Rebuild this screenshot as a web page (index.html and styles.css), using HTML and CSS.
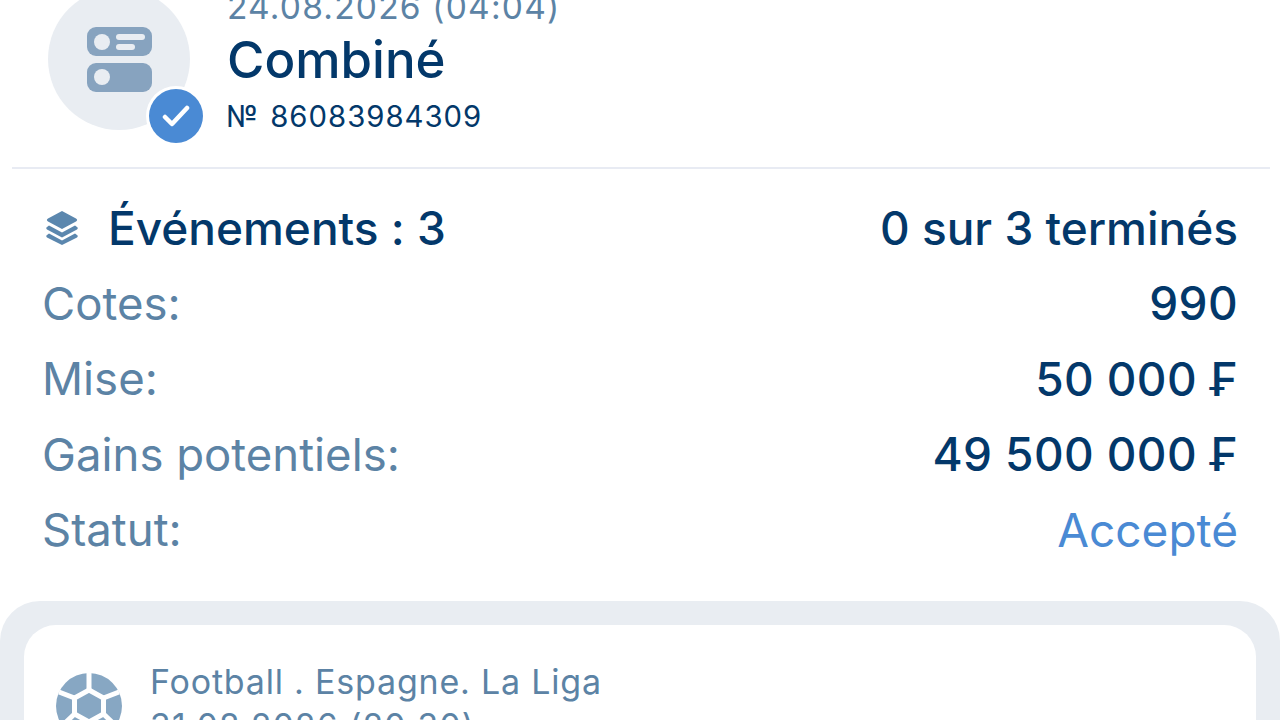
FILE: index.html
```html
<!DOCTYPE html>
<html lang="fr">
<head>
  <meta charset="UTF-8">
  <title>Combiné</title>
  <link rel="stylesheet" href="styles.css">
</head>
<body>
  <div class="page">

    <!-- Bet header -->
    <div class="bet-head">
      <div class="avatar">
        <svg class="avatar-icon" viewBox="0 0 66 66" width="66" height="66">
          <rect x="0" y="0" width="65" height="29" rx="9" fill="#87a3bf"/>
          <rect x="0" y="36" width="65" height="29" rx="9" fill="#87a3bf"/>
          <circle cx="15" cy="15" r="8" fill="#e9edf2"/>
          <circle cx="15" cy="50" r="8" fill="#e9edf2"/>
          <rect x="29" y="7" width="29" height="6" rx="3" fill="#e9edf2"/>
          <rect x="29" y="17" width="19" height="6" rx="3" fill="#e9edf2"/>
        </svg>
        <span class="badge">
          <svg viewBox="0 0 28 28" width="28" height="28">
            <path d="M3 15l7 7L25 6" fill="none" stroke="#fff" stroke-width="4.5" stroke-linecap="round" stroke-linejoin="round"/>
          </svg>
        </span>
      </div>
      <div class="bet-title">
        <div class="bet-date">24.08.2026 (04:04)</div>
        <div class="bet-name">Combiné</div>
        <div class="bet-number">№ 86083984309</div>
      </div>
    </div>

    <hr class="divider">

    <!-- Summary rows -->
    <div class="summary">
      <div class="row">
        <div class="events-label">
          <svg viewBox="0 0 32 34" width="32" height="34">
            <path d="M16 0l14 7.5c1.500.8 1.500 2.200 0 3L16 18 2 10.500c-1.500-.8-1.500-2.200 0-3z" fill="#5b87ae"/>
            <path d="M3 14.500l13 7 13-7 2 1.500c1 .8 1 1.700 0 2.400L16 26.500 1 18.400c-1-.7-1-1.600 0-2.400z" fill="#5b87ae"/>
            <path d="M3 22.500l13 7 13-7 2 1.500c1 .8 1 1.700 0 2.400L16 34 1 26.400c-1-.7-1-1.600 0-2.400z" fill="#5b87ae"/>
          </svg>
          <span class="value">Événements : 3</span>
        </div>
        <span class="value">0 sur 3 terminés</span>
      </div>
      <div class="row"><span class="label">Cotes:</span><span class="value amount">990</span></div>
      <div class="row"><span class="label">Mise:</span><span class="value amount">50 000 ₣</span></div>
      <div class="row"><span class="label">Gains potentiels:</span><span class="value amount">49 500 000 ₣</span></div>
      <div class="row"><span class="label">Statut:</span><span class="status">Accepté</span></div>
    </div>

    <!-- Events list -->
    <div class="events">
      <div class="event-card">
        <svg class="ball" viewBox="0 0 66 66" width="66" height="66">
          <circle cx="33" cy="33" r="33" fill="#87a7c3"/>
          <g stroke="#fff" stroke-width="5">
            <path d="M33 17V0M47.500 25L63 19M18.500 25L3 19M47.500 41L60 53M18.500 41L6 53"/>
            <path d="M33 17l14.500 8v16L33 49l-14.500-8V25z" fill="#87a7c3"/>
          </g>
        </svg>
        <div class="event-info">
          <div class="event-league">Football . Espagne. La Liga</div>
          <div class="event-date">31.08.2026 (20:30)</div>
        </div>
      </div>
    </div>

  </div>
</body>
</html>
```

FILE: styles.css
```css
/* Base */
body {
  margin: 0;
  background: #fff;
  font-family: 'Inter', 'Liberation Sans', sans-serif;
  font-feature-settings: 'calt' 0;
}

.page {
  height: 720px;
  overflow: hidden;
}

/* Header with avatar */
.bet-head {
  display: flex;
  gap: 38px;
  margin-top: -12px;
  padding-left: 48px;
}

.avatar {
  position: relative;
  display: flex;
  flex: none;
  align-items: center;
  justify-content: center;
  width: 142px;
  height: 142px;
  border-radius: 50%;
  background: #e9edf2;
}

.avatar-icon {
  margin: 2px 0 0 2px;
}

.badge {
  position: absolute;
  right: -13px;
  bottom: -13px;
  display: flex;
  align-items: center;
  justify-content: center;
  width: 54px;
  height: 54px;
  border-radius: 50%;
  background: #4a8ad4;
  box-shadow: 0 0 0 3px #fff;
}

.bet-title {
  margin-top: -1px;
  margin-left: -1px;
}

.bet-date {
  font-size: 33.500px;
  line-height: 40px;
  color: #5c83a5;
  letter-spacing: 1.200px;
}

.bet-name {
  font-size: 51px;
  font-weight: 500;
  line-height: 66px;
  color: #03386a;
}

.bet-number {
  margin-left: -1px;
  font-size: 29.300px;
  line-height: 48px;
  color: #03386a;
  letter-spacing: 1px;
  word-spacing: 2px;
}

.divider {
  margin: 26px 10px 0 12px;
  border: none;
  border-top: 2px solid #e8ebf3;
}

/* Summary rows */
.summary {
  padding: 21px 42px 0 42px;
}

.row {
  display: flex;
  justify-content: space-between;
  align-items: center;
  height: 75.500px;
}

.events-label {
  display: flex;
  align-items: center;
  gap: 30px;
  padding-left: 4px;
}

.label {
  font-size: 45.500px;
  color: #5c83a5;
}

.value {
  font-size: 46px;
  font-weight: 500;
  color: #03386a;
}

.amount {
  letter-spacing: 0.400px;
}

.status {
  font-size: 46px;
  color: #4a8ad4;
}

/* Events list */
.events {
  margin-top: 33px;
  padding: 24px;
  border-radius: 40px 40px 0 0;
  background: #e9edf2;
}

.event-card {
  display: flex;
  gap: 28px;
  padding: 35px 32px;
  border-radius: 32px;
  background: #fff;
}

.ball {
  flex: none;
  margin-top: 13px;
}

.event-league {
  font-size: 34px;
  line-height: 44px;
  color: #5c83a5;
  letter-spacing: 0.800px;
}

.event-date {
  font-size: 33.500px;
  line-height: 44px;
  color: #5c83a5;
  letter-spacing: 1.200px;
}
```
